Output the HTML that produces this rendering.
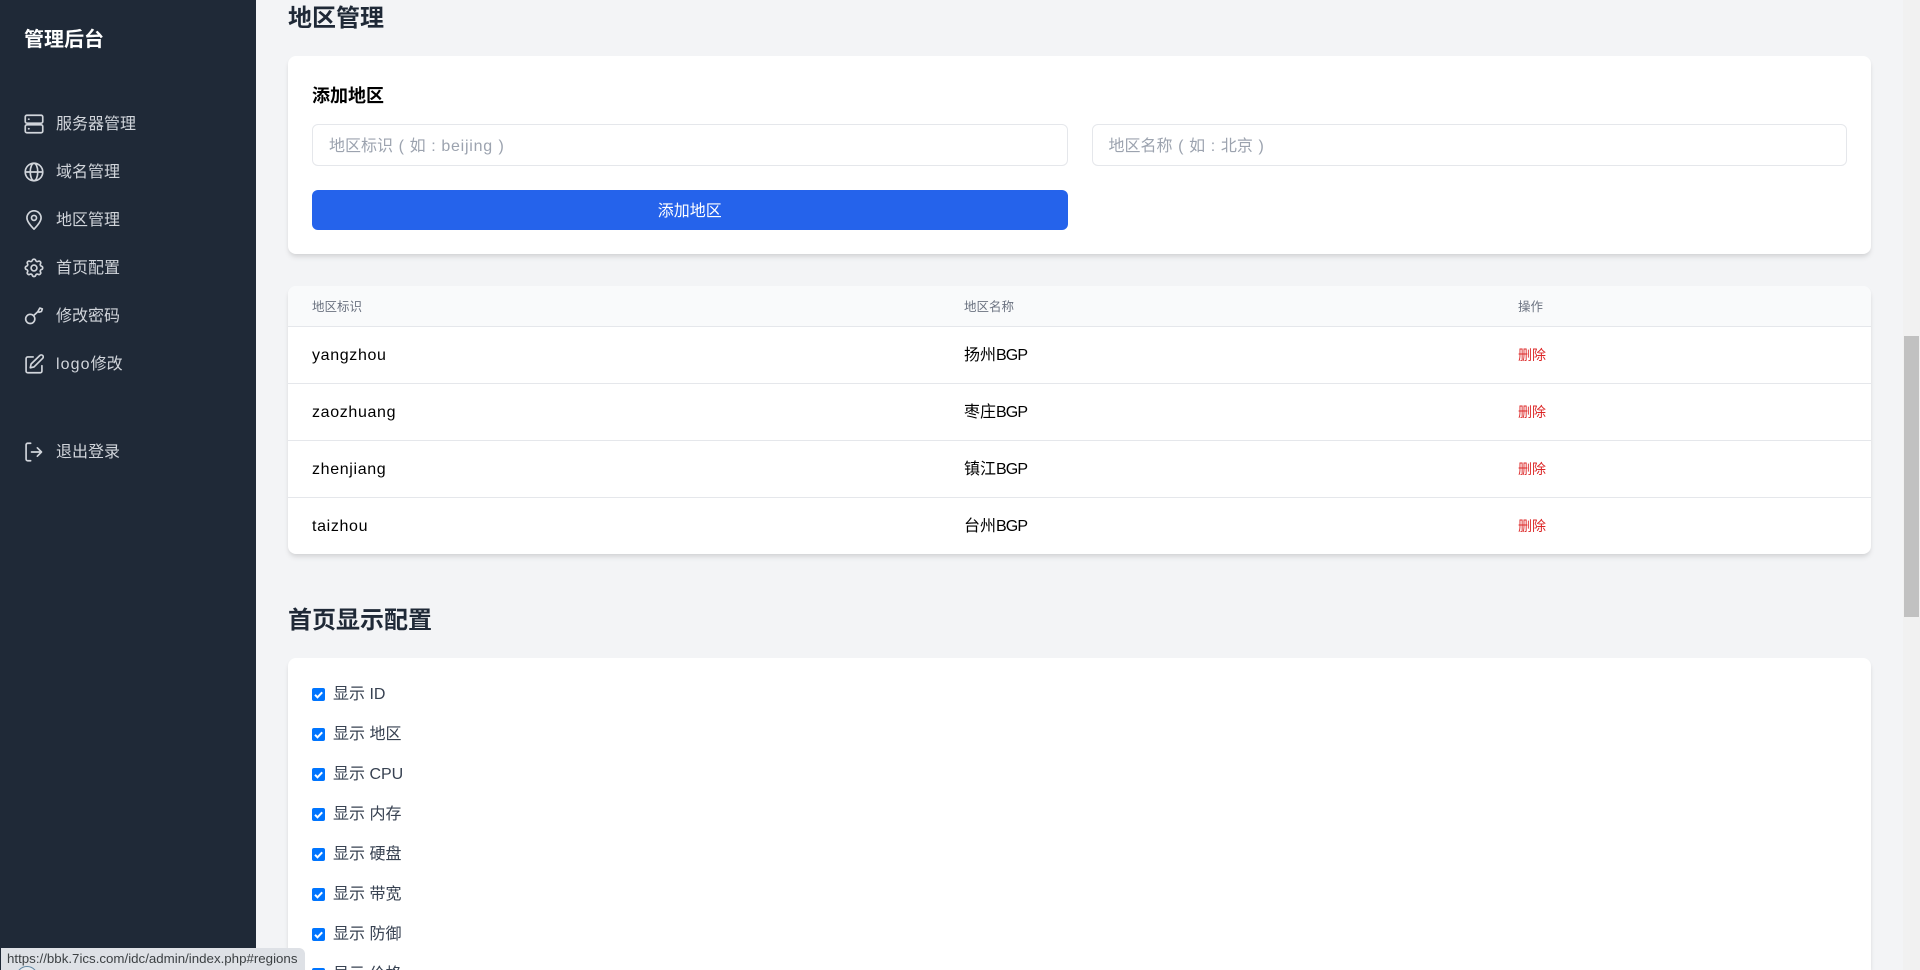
<!DOCTYPE html>
<html lang="zh-CN"><head><meta charset="utf-8"><title>管理后台</title>
<style>
*{box-sizing:border-box}
html,body{margin:0;padding:0;width:1920px;height:970px;overflow:hidden;background:#f3f4f6;font-family:"Liberation Sans","Noto Sans CJK SC",sans-serif;color:#000}
#wrap{position:relative;width:1920px;height:970px;overflow:hidden;background:#f3f4f6}
.abs,.side,.card,h2{position:absolute}
.side{left:0;top:0;width:256px;height:970px;background:#1f2937;color:#fff}
.logo{position:absolute;left:24px;top:26px;font-size:20px;line-height:28px;font-weight:700}
.nav{position:absolute;left:24px;width:220px;height:24px;display:flex;align-items:center;color:#d1d5db;font-size:16px;line-height:24px}
.nav span{position:relative;top:1px}
.nav svg{width:20px;height:20px;margin-right:12px;flex:none;fill:none;stroke:#d1d5db;stroke-width:2;stroke-linecap:round;stroke-linejoin:round}
h2{margin:0;left:288px;font-size:24px;line-height:32px;font-weight:700;color:#1f2937}
.card{left:288px;width:1583px;background:#fff;border-radius:8px;box-shadow:0 4px 6px -1px rgba(0,0,0,.1),0 2px 4px -1px rgba(0,0,0,.06);overflow:hidden}
.card h3{position:absolute;left:24px;top:26px;margin:0;font-size:18px;line-height:28px;font-weight:700}
.inp{position:absolute;top:68px;height:42px;width:755.5px;border:1px solid #e5e7eb;border-radius:6px;padding:2px 16px 0;font-size:16px;line-height:40px;color:#9ca3af;background:#fff;word-spacing:1.2px}
.inp b{font-weight:400;letter-spacing:.75px}
.btn{position:absolute;left:24px;top:134px;width:755.5px;height:40px;border-radius:6px;background:#2563eb;color:#fff;font-size:16px;line-height:44px;text-align:center}
.th,.td{position:absolute;white-space:nowrap}
.th{top:0;font-size:12.5px;line-height:43px;color:#6b7280}
.td{font-size:16px;line-height:58px}
.td.l{letter-spacing:.65px}
.td em{font-style:normal;letter-spacing:-.9px}
.del{font-size:14px;color:#dc2626;line-height:57px}
.row{position:absolute;left:0;width:1583px;height:1px;background:#e5e7eb}
.ck{position:absolute;left:24px;height:24px;display:flex;align-items:center;font-size:16px;color:#374151;line-height:24px;white-space:nowrap}
.ck span{position:relative;top:1px}
.ck svg{width:13px;height:13px;margin-right:8px;flex:none}
.status{position:absolute;left:0;top:948px;width:305px;height:22px;background:#dee1e6;border-top-right-radius:6px;font-size:13.3px;line-height:22px;padding-left:6px;color:#3c4043;white-space:nowrap;overflow:hidden;border-left:1px solid #1f2937}
.arc{position:absolute;left:16px;top:966px;width:22px;height:4px;overflow:hidden}
.arc i{display:block;width:22px;height:22px;border-radius:50%;background:#e8ebef;border:1px solid #5f86a3}
.sb{position:absolute;left:1903px;top:0;width:17px;height:970px;background:#f1f1f1}
.sb i{position:absolute;left:1px;top:336px;width:15px;height:281px;background:#c1c1c1}
</style></head><body>
<div id="wrap">
<div class="side">
<div class="logo">管理后台</div>
<div class="nav" style="top:112px"><svg viewBox="0 0 24 24"><rect x="1.500" y="1.500" width="21" height="9.500" rx="2"/><rect x="1.500" y="13" width="21" height="9.500" rx="2"/><path d="M5.500 6.200h.5M5.500 17.700h.5"/></svg><span>服务器管理</span></div>
<div class="nav" style="top:160px"><svg viewBox="0 0 24 24"><circle cx="12" cy="12" r="10.500"/><ellipse cx="12" cy="12" rx="4.500" ry="10.500"/><path d="M1.500 12h21"/></svg><span>域名管理</span></div>
<div class="nav" style="top:208px"><svg viewBox="0 0 24 24"><path d="M12 23c-1.800-1.900-8.500-8.300-8.500-13.500a8.500 8.500 0 0 1 17 0C20.500 14.700 13.800 21.100 12 23z"/><circle cx="12" cy="9.500" r="3"/></svg><span>地区管理</span></div>
<div class="nav" style="top:256px"><svg viewBox="0 0 24 24"><path d="M10 2.800c.5-1.900 3.500-1.900 4 0a2 2 0 0 0 3 1.200c1.800-1.100 3.900 1 2.800 2.800a2 2 0 0 0 1.200 3c1.900.5 1.900 3.500 0 4a2 2 0 0 0-1.200 3c1.100 1.800-1 3.900-2.800 2.800a2 2 0 0 0-3 1.200c-.5 1.900-3.500 1.900-4 0a2 2 0 0 0-3-1.200c-1.800 1.100-3.900-1-2.800-2.800a2 2 0 0 0-1.200-3c-1.900-.5-1.900-3.500 0-4a2 2 0 0 0 1.200-3C3.100 5 5.200 2.900 7 4a2 2 0 0 0 3-1.200z"/><circle cx="12" cy="12" r="3.500"/></svg><span>首页配置</span></div>
<div class="nav" style="top:304px"><svg viewBox="0 0 24 24"><circle cx="7.500" cy="15.500" r="5.500"/><path d="M11.500 11.500l5.500-5"/><path d="M17 6l2-3.500 3 1-1 3-3 1z"/></svg><span>修改密码</span></div>
<div class="nav" style="top:352px"><svg viewBox="0 0 24 24"><path d="M11 3.500H4.500a2 2 0 0 0-2 2v15a2 2 0 0 0 2 2h15a2 2 0 0 0 2-2V14"/><path d="M19 1.800a2.400 2.400 0 0 1 3.400 3.400L12 15.500l-4.500 1 1-4.500z"/></svg><span><span style="letter-spacing:1.1px;top:0">logo</span>修改</span></div>
<div class="nav" style="top:440px"><svg viewBox="0 0 24 24"><path d="M8 22.500H4.500a2 2 0 0 1-2-2v-17a2 2 0 0 1 2-2H8"/><path d="M16 7l5 5-5 5M21 12H9"/></svg><span>退出登录</span></div>
</div>

<h2 style="top:3px">地区管理</h2>
<div class="card" style="top:56px;height:198px">
<h3>添加地区</h3>
<div class="inp" style="left:24px">地区标识 ( 如 : <b>beijing</b> )</div>
<div class="inp" style="left:803.500px">地区名称 ( 如 : 北京 )</div>
<div class="btn">添加地区</div>
</div>

<div class="card" style="top:286px;height:268px">
<div class="abs" style="left:0;top:0;width:1583px;height:41px;background:#f9fafb"></div>
<div class="th" style="left:24px">地区标识</div><div class="th" style="left:676px">地区名称</div><div class="th" style="left:1230px">操作</div>
<div class="row" style="top:40px"></div><div class="row" style="top:97px"></div><div class="row" style="top:154px"></div><div class="row" style="top:211px"></div>
<div class="td l" style="left:24px;top:41px">yangzhou</div><div class="td" style="left:676px;top:41px">扬州<em>BGP</em></div><div class="td del" style="left:1230px;top:41px">删除</div>
<div class="td l" style="left:24px;top:98px">zaozhuang</div><div class="td" style="left:676px;top:98px">枣庄<em>BGP</em></div><div class="td del" style="left:1230px;top:98px">删除</div>
<div class="td l" style="left:24px;top:155px">zhenjiang</div><div class="td" style="left:676px;top:155px">镇江<em>BGP</em></div><div class="td del" style="left:1230px;top:155px">删除</div>
<div class="td l" style="left:24px;top:212px">taizhou</div><div class="td" style="left:676px;top:212px">台州<em>BGP</em></div><div class="td del" style="left:1230px;top:212px">删除</div>
</div>

<h2 style="top:605px">首页显示配置</h2>
<div class="card" style="top:658px;height:312px;border-radius:8px 8px 0 0">
<div class="ck" style="top:24px"><svg viewBox="0 0 13 13"><rect width="13" height="13" rx="2" fill="#0075ff"/><path d="M3 6.800l2.500 2.500 4.700-5" fill="none" stroke="#fff" stroke-width="2"/></svg><span>显示 ID</span></div>
<div class="ck" style="top:64px"><svg viewBox="0 0 13 13"><rect width="13" height="13" rx="2" fill="#0075ff"/><path d="M3 6.800l2.500 2.500 4.700-5" fill="none" stroke="#fff" stroke-width="2"/></svg><span>显示 地区</span></div>
<div class="ck" style="top:104px"><svg viewBox="0 0 13 13"><rect width="13" height="13" rx="2" fill="#0075ff"/><path d="M3 6.800l2.500 2.500 4.700-5" fill="none" stroke="#fff" stroke-width="2"/></svg><span>显示 CPU</span></div>
<div class="ck" style="top:144px"><svg viewBox="0 0 13 13"><rect width="13" height="13" rx="2" fill="#0075ff"/><path d="M3 6.800l2.500 2.500 4.700-5" fill="none" stroke="#fff" stroke-width="2"/></svg><span>显示 内存</span></div>
<div class="ck" style="top:184px"><svg viewBox="0 0 13 13"><rect width="13" height="13" rx="2" fill="#0075ff"/><path d="M3 6.800l2.500 2.500 4.700-5" fill="none" stroke="#fff" stroke-width="2"/></svg><span>显示 硬盘</span></div>
<div class="ck" style="top:224px"><svg viewBox="0 0 13 13"><rect width="13" height="13" rx="2" fill="#0075ff"/><path d="M3 6.800l2.500 2.500 4.700-5" fill="none" stroke="#fff" stroke-width="2"/></svg><span>显示 带宽</span></div>
<div class="ck" style="top:264px"><svg viewBox="0 0 13 13"><rect width="13" height="13" rx="2" fill="#0075ff"/><path d="M3 6.800l2.500 2.500 4.700-5" fill="none" stroke="#fff" stroke-width="2"/></svg><span>显示 防御</span></div>
<div class="abs" style="left:0;top:300px;width:400px;height:12px;overflow:hidden"><div class="ck" style="top:4px"><svg viewBox="0 0 13 13"><rect width="13" height="13" rx="2" fill="#0075ff"/><path d="M3 6.800l2.500 2.500 4.700-5" fill="none" stroke="#fff" stroke-width="2"/></svg><span>显示 价格</span></div></div>
</div>

<div class="sb"><i></i></div>
<div class="status">https://bbk.7ics.com/idc/admin/index.php#regions</div>
<div class="arc"><i></i></div>
</div>
</body></html>
